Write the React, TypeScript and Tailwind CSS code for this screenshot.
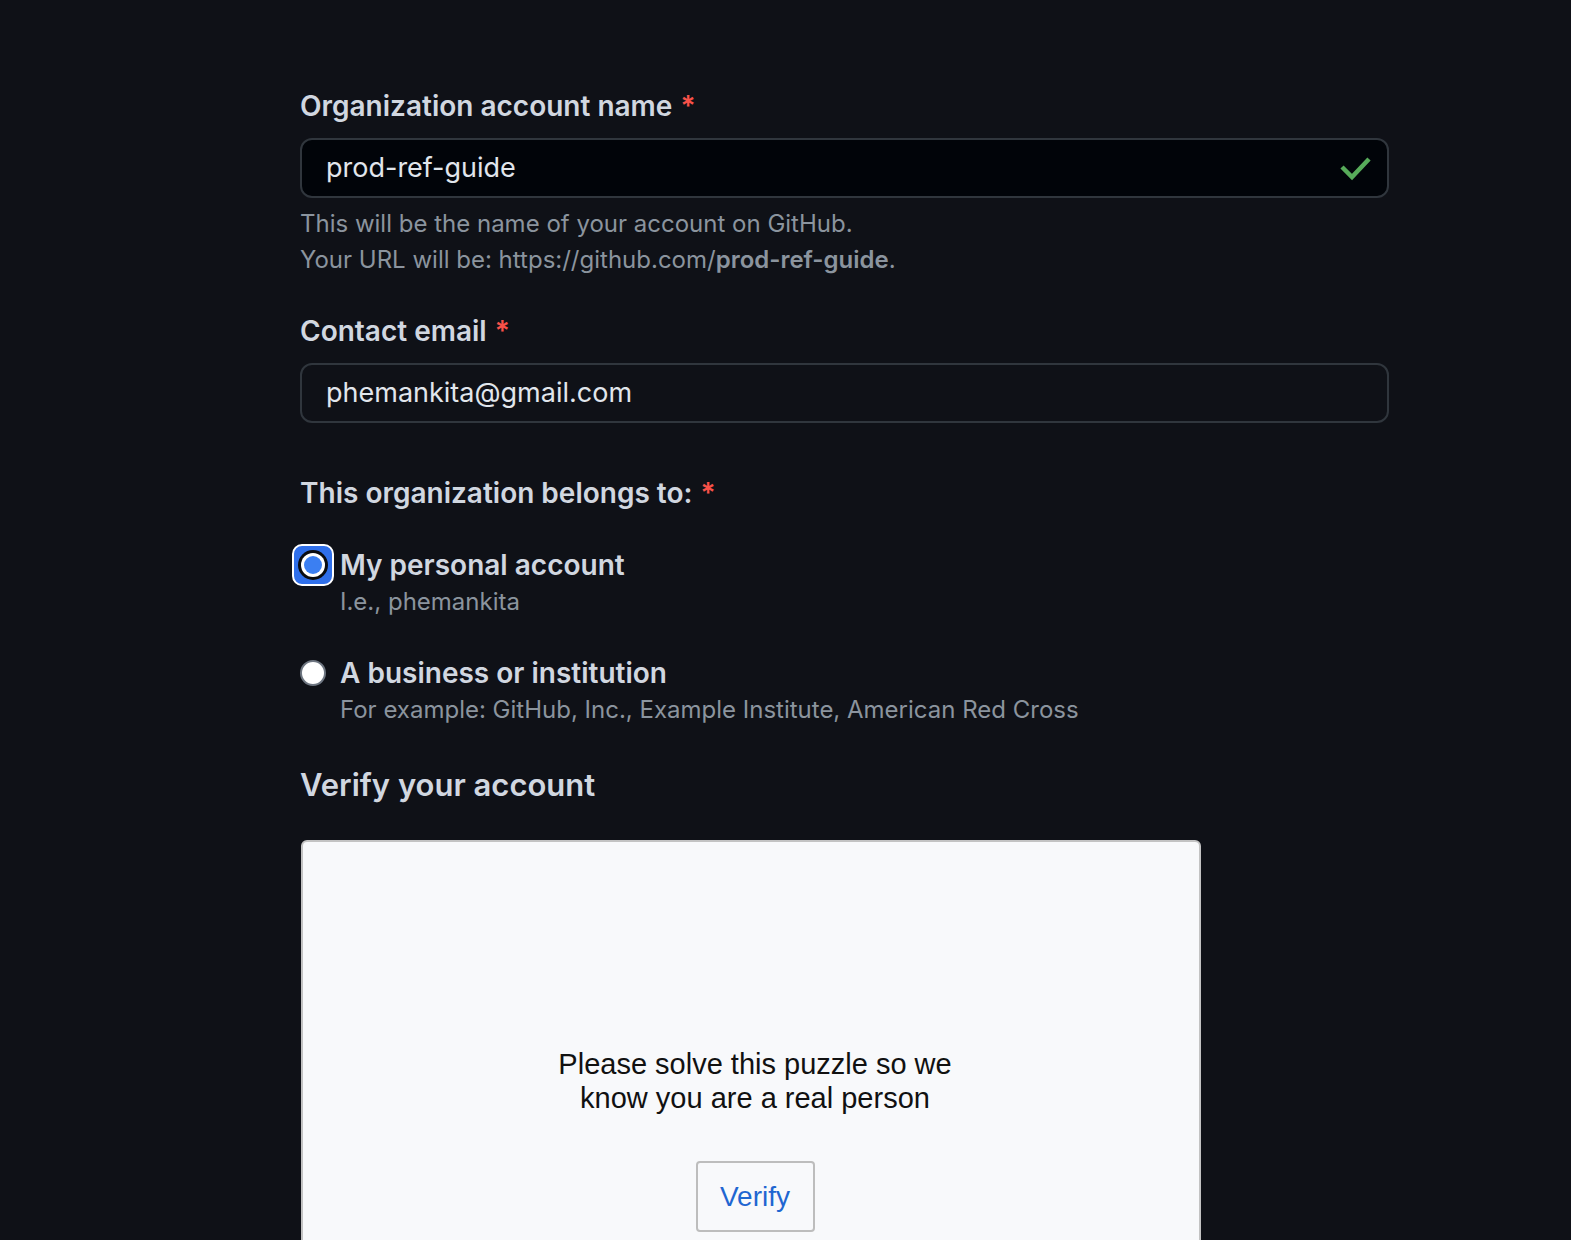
import React from 'react';

const font = { fontFamily: 'Inter, "Noto Sans", sans-serif' };

const Required = () => <span className="ml-[8px] text-[#f85149]">*</span>;

const Label = ({ children, className = '' }: { children: React.ReactNode; className?: string }) => (
  <div className={`text-[28px] leading-[36px] font-semibold text-[#d1d7e0] ${className}`}>
    {children}
    <Required />
  </div>
);

export default function App() {
  return (
    <div className="h-[1240px] overflow-hidden bg-[#0f1117]" style={font}>
      <div className="ml-[300px] w-[1089px] pt-[88px]">
        <Label>Organization account name</Label>
        <div className="mt-[14px] h-[60px] rounded-[12px] border-2 border-[#30363d] bg-[#010409] flex items-center justify-between pl-[24px] pr-[16px]">
          <span className="text-[27px] text-[#e1e6ec]">prod-ref-guide</span>
          <svg width="32" height="26" viewBox="0 0 32 26" fill="none">
            <polyline points="3,12 13,22 30,4" stroke="#57ab5a" strokeWidth="4.5" strokeLinecap="butt" strokeLinejoin="miter" />
          </svg>
        </div>
        <div className="mt-[8px] text-[24px] leading-[36px] text-[#8b949e]">
          <div>This will be the name of your account on GitHub.</div>
          <div>
            Your URL will be: https://github.com/<span className="font-semibold">prod-ref-guide</span>.
          </div>
        </div>

        <Label className="mt-[35px]">Contact email</Label>
        <div className="mt-[14px] h-[60px] rounded-[12px] border-2 border-[#30363d] bg-[#0f1117] flex items-center pl-[24px]">
          <span className="text-[27px] text-[#e1e6ec]">phemankita@gmail.com</span>
        </div>

        <Label className="mt-[52px]">This organization belongs to:</Label>

        <div className="mt-[35px] flex items-start">
          <div className="w-[42px] h-[42px] -ml-[8px] mr-[6px] -mt-[2px] rounded-[10px] border-2 border-white bg-[#2f6fea] flex items-center justify-center shrink-0">
            <div className="w-[30px] h-[30px] rounded-full bg-[#0a0c10] flex items-center justify-center">
              <div className="w-[24px] h-[24px] rounded-full bg-white flex items-center justify-center">
                <div className="w-[18px] h-[18px] rounded-full bg-[#3b7ff2]" />
              </div>
            </div>
          </div>
          <div>
            <div className="text-[28px] leading-[38px] font-semibold text-[#d1d7e0]">My personal account</div>
            <div className="text-[24px] leading-[36px] text-[#8b949e]">I.e., phemankita</div>
          </div>
        </div>

        <div className="mt-[34px] flex items-start">
          <div className="w-[26px] h-[26px] mt-[6px] mr-[14px] rounded-full bg-white border-2 border-[#6e7681] shrink-0" />
          <div>
            <div className="text-[28px] leading-[38px] font-semibold text-[#d1d7e0]">A business or institution</div>
            <div className="text-[24px] leading-[36px] text-[#8b949e]">For example: GitHub, Inc., Example Institute, American Red Cross</div>
          </div>
        </div>

        <div className="mt-[37px] text-[31px] leading-[40px] font-semibold text-[#d1d7e0]">Verify your account</div>

        <div
          className="mt-[35px] ml-[1px] w-[900px] h-[440px] rounded-[6px] border-2 border-[#c3c3c3] bg-[#f8f9fb] flex flex-col items-center pt-[205px] pl-[8px]"
          style={{ fontFamily: '"Liberation Sans", Arial, sans-serif' }}
        >
          <div className="text-[29px] leading-[34px] text-[#111] text-center">
            Please solve this puzzle so we
            <br />
            know you are a real person
          </div>
          <button className="mt-[46px] w-[119px] h-[71px] rounded-[4px] border-2 border-[#bdbdbd] text-[28px] text-[#1f66d1] bg-transparent">
            Verify
          </button>
        </div>
      </div>
    </div>
  );
}
